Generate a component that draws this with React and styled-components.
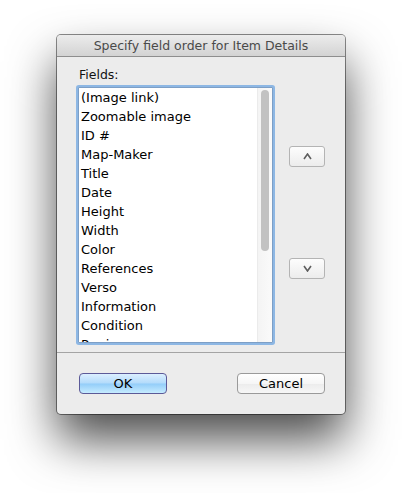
import styled, { createGlobalStyle } from "styled-components";

const fields = [
  "(Image link)",
  "Zoomable image",
  "ID #",
  "Map-Maker",
  "Title",
  "Date",
  "Height",
  "Width",
  "Color",
  "References",
  "Verso",
  "Information",
  "Condition",
  "Region",
];

const GlobalStyle = createGlobalStyle`
  body {
    margin: 0;
    background: #ffffff;
    font-family: "DejaVu Sans", "Liberation Sans", sans-serif;
  }
`;

const Chevron = ({ down }) => (
  <svg width="9" height="7" viewBox="0 0 9 7">
    <polyline
      points={down ? "1,1 4.5,6 8,1" : "1,6 4.5,1 8,6"}
      fill="none"
      stroke="#5e5e5e"
      strokeWidth="1.6"
    />
  </svg>
);

const App = () => {
  return (
    <Page>
      <GlobalStyle />
      <Window>
        <TitleBar>Specify field order for Item Details</TitleBar>
        <Body>
          <Label>Fields:</Label>
          <MainRow>
            <ListBox>
              <Items>
                {fields.map((f) => (
                  <Item key={f}>{f}</Item>
                ))}
              </Items>
              <Track>
                <Thumb />
              </Track>
            </ListBox>
            <MoveColumn>
              <SmallButton><Chevron /></SmallButton>
              <SmallButton><Chevron down /></SmallButton>
            </MoveColumn>
          </MainRow>
        </Body>
        <Footer>
          <PushButton primary>OK</PushButton>
          <PushButton>Cancel</PushButton>
        </Footer>
      </Window>
    </Page>
  );
};

const Page = styled.div`
  padding: 35px 0 0 57px;
  height: 458px;
`;

const Window = styled.div`
  width: 288px;
  height: 379px;
  background: #ececec;
  border-radius: 4px;
  box-shadow: 0 0 0 1px rgba(0, 0, 0, 0.45), 0 26px 48px rgba(0, 0, 0, 0.7);
  display: flex;
  flex-direction: column;
  overflow: hidden;
`;

const TitleBar = styled.div`
  height: 21px;
  border-bottom: 1px solid #8e8e8e;
  background: linear-gradient(#ececec, #d3d3d3);
  color: #4a4a4a;
  font-size: 12.5px;
  line-height: 22px;
  text-align: center;
`;

const Body = styled.div`
  box-sizing: border-box;
  height: 296px;
  padding: 10px 0 0 19px;
  border-bottom: 1px solid #a4a4a4;
`;

const Label = styled.div`
  font-size: 12.5px;
  line-height: 15px;
  padding-left: 3px;
  margin-bottom: 3px;
  color: #111;
`;

const MainRow = styled.div`
  display: flex;
`;

const ListBox = styled.div`
  margin: 2px;
  width: 195px;
  height: 256px;
  background: #fff;
  border: 1px solid #7d9fc6;
  box-shadow: 0 0 0 2px rgba(110, 165, 225, 0.75);
  border-radius: 1px;
  box-sizing: border-box;
  display: flex;
  overflow: hidden;
`;

const Items = styled.div`
  flex: 1;
  padding: 0 0 0 2px;
`;

const Item = styled.div`
  height: 19px;
  line-height: 19px;
  font-size: 13px;
  color: #000;
  white-space: nowrap;
`;

const Track = styled.div`
  width: 15px;
  border-left: 1px solid #ebebeb;
  background: linear-gradient(90deg, #f4f4f4, #fafafa);
  padding: 2px 0 0 3px;
  box-sizing: border-box;
`;

const Thumb = styled.div`
  width: 8px;
  height: 161px;
  border-radius: 4px;
  background: #c2c2c2;
`;

const MoveColumn = styled.div`
  display: flex;
  flex-direction: column;
  gap: 91px;
  padding: 61px 0 0 14px;
`;

const SmallButton = styled.div`
  width: 36px;
  height: 21px;
  box-sizing: border-box;
  border: 1px solid #b4b4b4;
  border-radius: 3px;
  background: linear-gradient(#fdfdfd, #ececec);
  display: flex;
  align-items: center;
  justify-content: center;
`;

const Footer = styled.div`
  display: flex;
  justify-content: space-between;
  padding: 20px 20px 0 22px;
`;

const PushButton = styled.div`
  width: 88px;
  height: 21px;
  box-sizing: border-box;
  border-radius: 4px;
  border: 1px solid ${(p) => (p.primary ? "#5c5a98" : "#9a9a9a")};
  background: ${(p) =>
    p.primary
      ? "linear-gradient(#dcefff 0%, #b3dbfb 48%, #93cdf9 52%, #c6ecff 100%)"
      : "linear-gradient(#ffffff 0%, #f6f6f6 50%, #ececec 52%, #f7f7f7 100%)"};
  font-size: 13px;
  line-height: 19px;
  text-align: center;
  color: #000;
`;

export default App;
